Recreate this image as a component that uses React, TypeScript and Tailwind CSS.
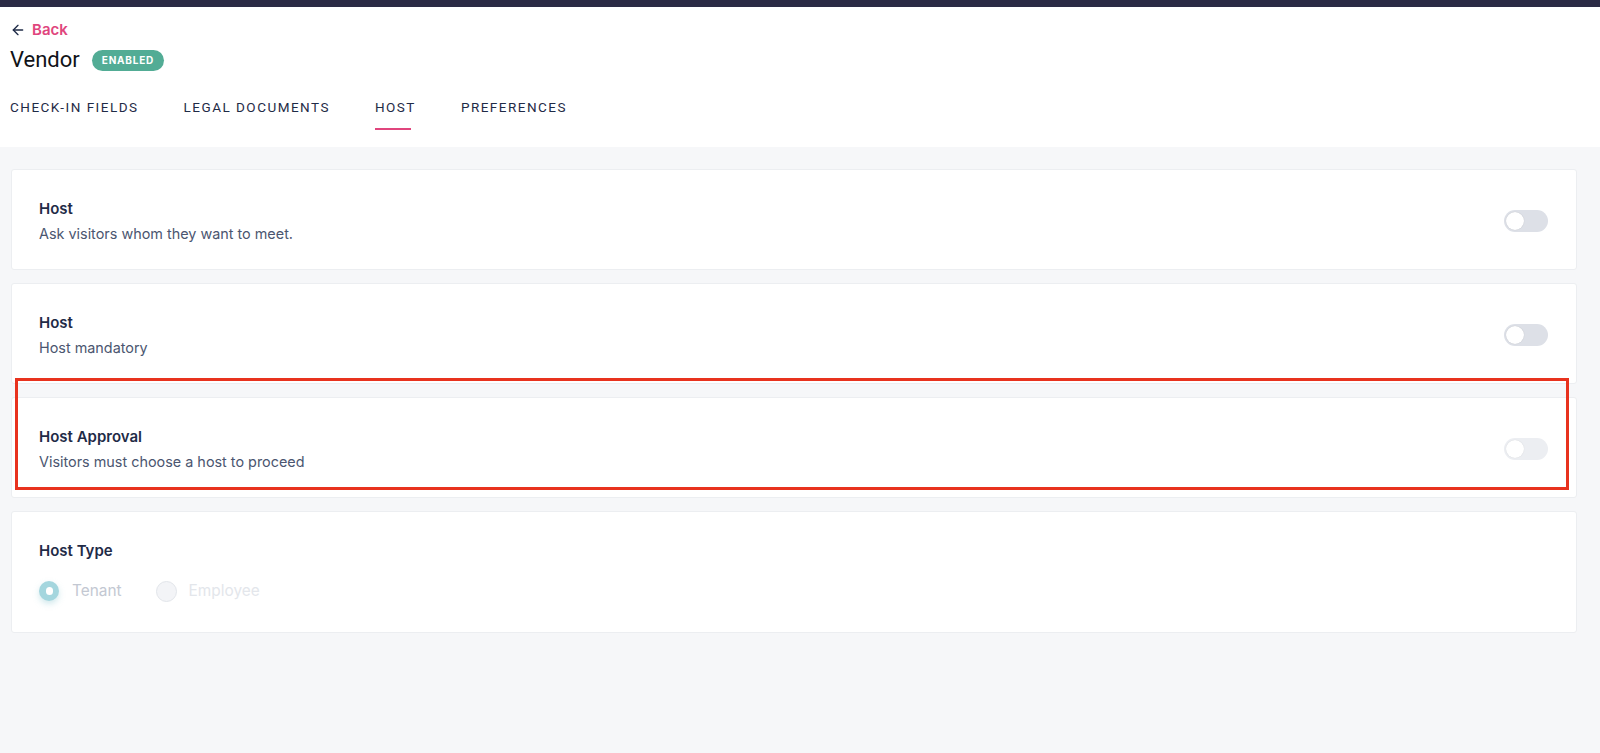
import React from "react";
import { ArrowLeft } from "lucide-react";

function Toggle({ faded = false }: { faded?: boolean }) {
  return (
    <div
      className={
        faded
          ? "w-[44px] h-[22px] rounded-full bg-[#eceef2] flex items-center px-[2px]"
          : "w-[44px] h-[22px] rounded-full bg-[#dde0e7] flex items-center px-[2px]"
      }
    >
      <div
        className={
          faded
            ? "w-[18px] h-[18px] rounded-full bg-white shadow-[0_0_1px_rgba(0,0,0,0.15)]"
            : "w-[18px] h-[18px] rounded-full bg-white shadow-[0_0_1px_rgba(0,0,0,0.2)]"
        }
      />
    </div>
  );
}

function SettingCard({
  title,
  subtitle,
  faded = false,
}: {
  title: string;
  subtitle: string;
  faded?: boolean;
}) {
  return (
    <div className="bg-white border border-[#eceef1] rounded-[3px] pl-[27px] pr-[28px] pt-[28px] pb-[25px] flex items-center justify-between">
      <div className="flex flex-col gap-[4px]">
        <div className="text-[15px] leading-[22px] font-semibold text-[#1f2b47]">{title}</div>
        <div className="text-[14.4px] leading-[20px] text-[#4b5670]">{subtitle}</div>
      </div>
      <Toggle faded={faded} />
    </div>
  );
}

export default function App() {
  return (
    <div
      className="min-h-[753px] bg-[#f6f7f9]"
      style={{ fontFamily: "Inter, 'Noto Sans', sans-serif" }}
    >
      <div className="h-[7px] bg-[#2b2a45]" />
      <div className="bg-white pl-[10px] h-[140px] flex flex-col">
        <div className="flex items-center gap-[6px] mt-[14px] h-[18px]">
          <ArrowLeft size={16} strokeWidth={2} className="text-[#1f2b47]" />
          <span className="text-[15px] font-semibold text-[#e0457d] leading-[18px]">Back</span>
        </div>
        <div className="flex items-center gap-[12px] mt-[9px] h-[24px]">
          <span className="text-[22px] leading-[24px] text-[#111318]" style={{ fontFamily: "Roboto, Inter, sans-serif" }}>Vendor</span>
          <span className="h-[21px] px-[10px] rounded-full bg-[#52ac95] text-white text-[10px] font-bold tracking-[0.08em] flex items-center">
            ENABLED
          </span>
        </div>
        <div className="flex mt-[27px] gap-[45px] text-[13.5px] font-normal tracking-[0.11em] text-[#1f2b47]" style={{ fontFamily: "Roboto, Inter, sans-serif" }}>
          <div className="leading-[16px]">CHECK-IN FIELDS</div>
          <div className="leading-[16px]">LEGAL DOCUMENTS</div>
          <div className="leading-[16px] flex flex-col items-start">
            <span>HOST</span>
            <span className="mt-[13px] h-[2px] w-[36px] bg-[#e0457d]" />
          </div>
          <div className="leading-[16px]">PREFERENCES</div>
        </div>
      </div>

      <div className="relative pl-[11px] pr-[23px] pt-[22px] flex flex-col gap-[13px]">
        <SettingCard title="Host" subtitle="Ask visitors whom they want to meet." />
        <SettingCard title="Host" subtitle="Host mandatory" />
        <SettingCard title="Host Approval" subtitle="Visitors must choose a host to proceed" faded />
        <div className="bg-white border border-[#eceef1] rounded-[3px] pl-[27px] pr-[28px] pt-[28px] pb-[30px] flex flex-col gap-[18px]">
          <div className="text-[15px] leading-[22px] font-semibold text-[#1f2b47]">Host Type</div>
          <div className="flex items-center h-[22px]">
            <div className="w-[20px] h-[20px] rounded-full bg-[#a4d6de] flex items-center justify-center shadow-[0_3px_6px_rgba(120,190,200,0.35)]">
              <div className="w-[7px] h-[8px] rounded-full bg-white" />
            </div>
            <span className="ml-[13px] text-[15.4px] text-[#c3c8d2]">Tenant</span>
            <div className="ml-[34px] w-[21px] h-[21px] rounded-full bg-[#f3f4f7] border border-[#e2e5ea]" />
            <span className="ml-[12px] text-[15.4px] text-[#e3e6eb]">Employee</span>
          </div>
        </div>
        <div className="absolute left-[15px] top-[231px] w-[1554px] h-[112px] border-[3px] border-[#e8321e] pointer-events-none" />
      </div>
    </div>
  );
}
